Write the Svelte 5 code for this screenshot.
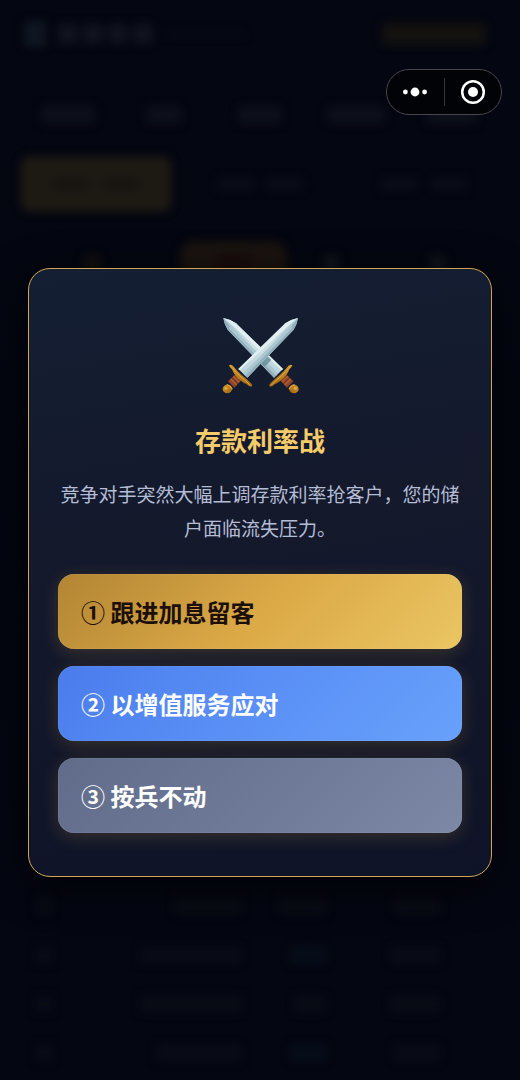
<script>
  const choices = [
    { label: '① 跟进加息留客', tone: 'gold' },
    { label: '② 以增值服务应对', tone: 'blue' },
    { label: '③ 按兵不动', tone: 'slate' }
  ];
  const stats = [54, 36, 44, 58, 50];
  const rows = [
    { name: 68, a: 48, b: 46, tint: false },
    { name: 102, a: 36, b: 50, tint: true },
    { name: 102, a: 32, b: 50, tint: false },
    { name: 86, a: 36, b: 46, tint: true }
  ];
  let picked = $state(null);
</script>

<div class="page">
  <div class="scene" aria-hidden="true">
    <div class="brand">
      <i class="logo"></i>
      <div class="name"><i></i><i></i><i></i><i></i></div>
      <i class="tagline"></i>
      <i class="badge"></i>
    </div>
    <div class="stats">
      {#each stats as w}
        <div><i style="width: {w}px"></i></div>
      {/each}
    </div>
    <div class="actions">
      <div class="action active"><i></i><i></i></div>
      <div class="action"><i></i><i></i></div>
      <div class="action"><i></i><i></i></div>
    </div>
    <div class="tabs">
      <div><i class="warm"></i></div>
      <div class="active"><i class="dark"></i></div>
      <div><i></i></div>
      <div><i></i></div>
    </div>
    <div class="rows">
      {#each rows as r}
        <div class="row">
          <i class="rank"></i>
          <i class="end" style="width: {r.name}px"></i>
          <i class="end" class:tint={r.tint} style="width: {r.a}px"></i>
          <i class="end" style="width: {r.b}px"></i>
        </div>
      {/each}
    </div>
  </div>

  <div class="overlay">
    <div class="dialog" role="dialog" aria-modal="true" aria-labelledby="event-title" aria-describedby="event-text">
      <svg class="swords" viewBox="60 48 240 240" aria-hidden="true">
        <defs>
          <linearGradient id="steel" x1="0" y1="1" x2="1" y2="0">
            <stop offset="0" stop-color="#b9d3da" />
            <stop offset="0.5" stop-color="#cfe1e6" />
            <stop offset="1" stop-color="#a9c6d0" />
          </linearGradient>
          <linearGradient id="brass" x1="0" y1="0" x2="1" y2="1">
            <stop offset="0" stop-color="#d0952a" />
            <stop offset="1" stop-color="#a06614" />
          </linearGradient>
          <g id="sword">
            <path d="M294 54 Q291 74 281 89 L142 233 L115 207 L256 70 Q272 58 294 54Z" fill="url(#steel)" />
            <path d="M294 54 Q291 74 281 89 L142 233 L133 224 L272 82Z" fill="#91b0bc" />
            <path d="M272 77 L129 220 L136 227 L277 84Z" fill="#abc8d1" />
            <path d="M256 70 Q272 58 294 54 L276 68 L119 211 L115 207Z" fill="#e2eff1" />
            <path d="M112 217 L130 234 L103 263 L84 244Z" fill="#8e4327" />
            <path d="M108 221 L126 239 M100 229 L118 247 M92 237 L110 255" stroke="#ad5d38" stroke-width="4" />
            <path d="M104 225 L122 243 M96 233 L114 251" stroke="#5d2a1c" stroke-width="2" />
            <ellipse cx="82" cy="267" rx="14" ry="13" fill="url(#brass)" />
            <path d="M80 254 Q92 257 97 268" fill="none" stroke="#d9a338" stroke-width="4" />
            <ellipse cx="78" cy="265" rx="5" ry="4" fill="#e0ae40" />
            <path d="M87 196 Q94 191 102 201 Q112 214 124 224 Q140 236 153 250 Q159 257 154 260 Q147 260 138 251 Q127 247 112 233 Q99 218 97 209 Q88 202 87 196Z" fill="url(#brass)" />
            <path d="M91 197 Q107 215 119 227 Q134 239 150 255" fill="none" stroke="#deaa3e" stroke-width="3" stroke-linecap="round" />
          </g>
        </defs>
        <use href="#sword" transform="translate(364 0) scale(-1 1)" />
        <path d="M203 169 L214 180 L194 200 L183 190Z" fill="#638999" opacity="0.8" />
        <use href="#sword" />
      </svg>
      <h1 id="event-title">存款利率战</h1>
      <p id="event-text">竞争对手突然大幅上调存款利率抢客户，您的储户面临流失压力。</p>
      <div class="choices">
        {#each choices as c, i}
          <button type="button" class="choice {c.tone}" aria-pressed={picked === i} onclick={() => (picked = i)}>{c.label}</button>
        {/each}
      </div>
    </div>
  </div>

  <div class="capsule">
    <button type="button" aria-label="更多">
      <svg width="26" height="26" viewBox="0 0 26 26" fill="#fff">
        <circle cx="3.4" cy="13" r="2.4" /><circle cx="13" cy="13" r="4.4" /><circle cx="22.6" cy="13" r="2.4" />
      </svg>
    </button>
    <span class="divider"></span>
    <button type="button" aria-label="关闭">
      <svg width="26" height="26" viewBox="0 0 26 26">
        <circle cx="13" cy="13" r="10.8" fill="none" stroke="#fff" stroke-width="2.5" /><circle cx="13" cy="13" r="5" fill="#fff" />
      </svg>
    </button>
  </div>
</div>

<style>
  :global(body) {
    margin: 0;
    background: #040611;
  }
  .page {
    position: relative;
    min-height: 100vh;
    display: grid;
    overflow: hidden;
    background: linear-gradient(#040612, #03060f 50%, #040612);
    font-family: 'Noto Sans CJK SC', sans-serif;
  }
  .scene,
  .overlay {
    grid-area: 1 / 1;
    min-width: 0;
  }
  .scene {
    display: flex;
    flex-direction: column;
    box-sizing: border-box;
    padding: 20px 20px 18px;
    filter: blur(4px);
  }
  .scene i {
    display: block;
    height: 18px;
    border-radius: 4px;
    background: #0d101a;
  }
  .brand {
    display: flex;
    align-items: center;
    gap: 12px;
    height: 28px;
    padding: 0 14px 0 4px;
  }
  .brand .logo {
    width: 22px;
    height: 26px;
    background: #0f1621;
  }
  .name {
    display: flex;
    gap: 5px;
  }
  .name i {
    width: 20px;
    height: 20px;
    background: #11131e;
  }
  .brand .tagline {
    width: 80px;
    height: 6px;
    background: #070b16;
  }
  .brand .badge {
    width: 104px;
    height: 22px;
    margin-left: auto;
    background: #13120f;
  }
  .stats {
    display: grid;
    grid-template-columns: repeat(5, 1fr);
    justify-items: center;
    margin-top: 58px;
  }
  .actions {
    display: grid;
    grid-template-columns: repeat(3, 1fr);
    gap: 12px;
    margin-top: 32px;
  }
  .action {
    display: flex;
    align-items: center;
    justify-content: center;
    gap: 14px;
    height: 56px;
    border-radius: 10px;
  }
  .action i {
    width: 36px;
    height: 14px;
    background: #090d18;
  }
  .action.active {
    background: #1d1913;
  }
  .action.active i {
    background: #181512;
  }
  .tabs {
    display: grid;
    grid-template-columns: 144fr 107fr 56fr 125fr;
    gap: 16px;
    margin-top: 29px;
  }
  .tabs div {
    display: flex;
    justify-content: center;
    height: 44px;
    padding-top: 14px;
    box-sizing: border-box;
    border-radius: 14px;
  }
  .tabs .active {
    background: #1a130f;
  }
  .tabs i {
    width: 16px;
    background: #10131c;
  }
  .tabs .warm {
    background: #13100f;
  }
  .tabs .dark {
    width: 36px;
    background: #170c0c;
  }
  .rows {
    display: grid;
    gap: 31px;
    margin-top: auto;
    padding: 0 60px 0 16px;
  }
  .row {
    display: grid;
    grid-template-columns: 16px 1fr 84px 114px;
  }
  .rows i {
    background: #090b15;
  }
  .rows .end {
    justify-self: end;
  }
  .rows .tint {
    background: #060d19;
  }
  .overlay {
    position: relative;
    display: flex;
    align-items: center;
    justify-content: center;
    box-sizing: border-box;
    padding: 65px 28px 0;
  }
  .dialog {
    display: flex;
    flex-direction: column;
    align-items: center;
    width: 100%;
    max-width: 520px;
    box-sizing: border-box;
    padding: 47px 29px 43px;
    border: 1px solid #d0a655;
    border-radius: 22px;
    background: linear-gradient(170deg, #141f33, #14192c 40%, #0e1328);
    box-shadow: 0 10px 40px rgba(0, 0, 0, 0.6);
  }
  .swords {
    width: 80px;
    height: 80px;
  }
  h1 {
    margin: 26px 0 19px;
    color: #f5cb69;
    font-size: 26px;
    line-height: 36px;
    font-weight: 700;
  }
  p {
    margin: 0 0 29px;
    color: #b4bdd6;
    font-size: 19px;
    line-height: 34px;
    font-weight: 400;
    text-align: center;
  }
  .choices {
    display: grid;
    gap: 17px;
    width: 100%;
  }
  .choice {
    height: 75px;
    padding: 0 23px;
    border: 0;
    border-radius: 16px;
    color: #fff;
    font-family: inherit;
    font-size: 24px;
    line-height: 34px;
    font-weight: 700;
    text-align: left;
    cursor: pointer;
    box-shadow: 0 4px 18px rgba(220, 170, 60, 0.2), inset 0 0 1px rgba(255, 255, 255, 0.5);
  }
  .gold {
    color: #1b0f08;
    background: linear-gradient(135deg, #b38534, #dba946 50%, #eac663);
  }
  .blue {
    background: linear-gradient(135deg, #4a7cec, #5a90f6 50%, #68a1fb);
  }
  .slate {
    background: linear-gradient(135deg, #606c8a, #6d7997 50%, #7c88a6);
  }
  .capsule {
    position: absolute;
    top: 69px;
    right: 18px;
    display: flex;
    align-items: center;
    width: 116px;
    height: 46px;
    box-sizing: border-box;
    border: 1px solid #46474c;
    border-radius: 23px;
    background: #020307;
  }
  .capsule button {
    display: flex;
    flex: 1;
    align-items: center;
    justify-content: center;
    height: 100%;
    padding: 0;
    border: 0;
    background: none;
    cursor: pointer;
  }
  .divider {
    width: 1px;
    height: 28px;
    background: #36373c;
  }
</style>
